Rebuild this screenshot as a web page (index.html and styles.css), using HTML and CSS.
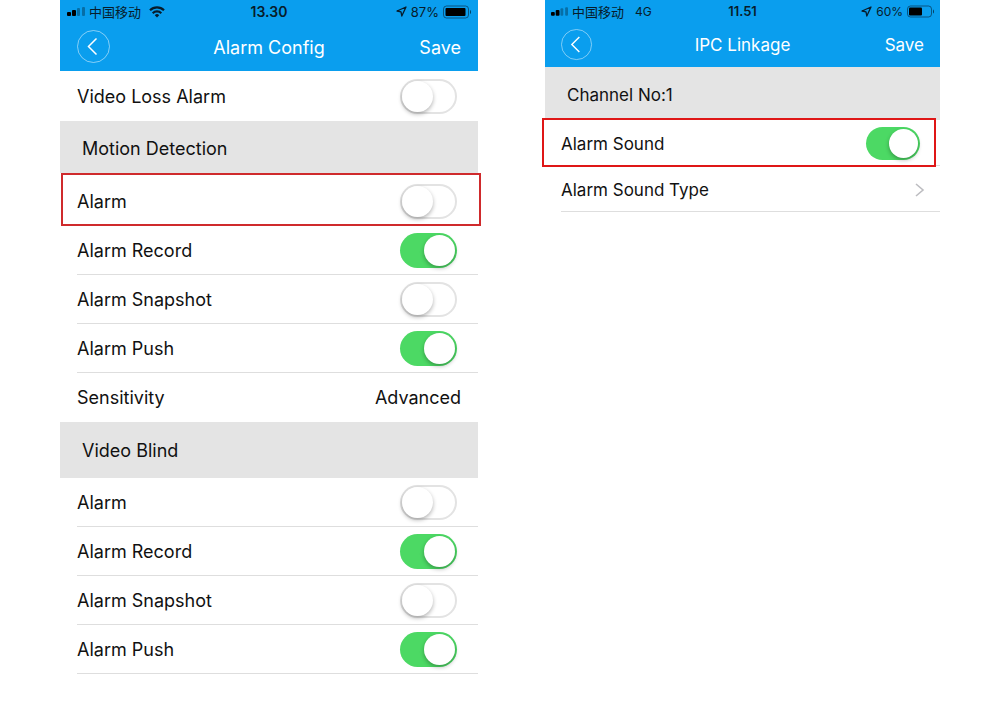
FILE: index.html
```html
<!DOCTYPE html>
<html lang="en">
<head>
  <meta charset="UTF-8">
  <meta name="viewport" content="width=device-width, initial-scale=1">
  <title>Alarm Config</title>
  <link rel="stylesheet" href="styles.css">
</head>
<body>
  <main class="screens">

    <!-- Alarm Config -->
    <section class="phone">
      <header class="header">
        <div class="status-bar">
          <div class="status-left">
            <svg width="18" height="9" viewBox="0 0 18 9">
              <rect x="0" y="5" width="4" height="4" rx="1"/>
              <rect x="5" y="3" width="4" height="6" rx="1"/>
              <rect x="10" y="1" width="3" height="8" rx="1" opacity=".3"/>
              <rect x="15" y="0" width="3" height="9" rx="1" opacity=".3"/>
            </svg>
            <span>中国移动</span>
            <svg class="wifi" width="16" height="12" viewBox="0 0 16 12" fill="none" stroke="#071c2b" stroke-width="2.2">
              <path d="M1 4.3a10 10 0 0 1 14 0"/>
              <path d="M3.7 7.2a6.2 6.2 0 0 1 8.6 0"/>
              <path d="M8 11.5 5.8 9.2a3.1 3.1 0 0 1 4.4 0z" fill="#071c2b" stroke="none"/>
            </svg>
          </div>
          <span class="time">13.30</span>
          <div class="status-right">
            <svg width="11" height="11" viewBox="0 0 11 11" fill="none" stroke="#071c2b" stroke-width="1.3" stroke-linejoin="round">
              <path d="M10 1 1 5 5 5.800 5.800 10z"/>
            </svg>
            <span>87%</span>
            <svg width="28" height="14" viewBox="0 0 28 14">
              <rect x=".5" y="1" width="25" height="12" rx="3" fill="none" stroke="#071c2b" stroke-opacity=".55"/>
              <rect x="2.5" y="3" width="20" height="8" rx="1"/>
              <path d="M27 5v4c1.300-.6 1.300-3.400 0-4z" opacity=".6"/>
            </svg>
          </div>
        </div>
        <div class="nav-bar">
          <button class="back" aria-label="Back">
            <svg width="34" height="34" viewBox="0 0 34 34" fill="none" stroke="#fff">
              <circle cx="16.500" cy="16.500" r="16" stroke-opacity=".5"/>
              <path d="M19.500 8.500 11.500 16.500l8 8" stroke-width="1.5"/>
            </svg>
          </button>
          <h1>Alarm Config</h1>
          <button class="save">Save</button>
        </div>
      </header>

      <div class="row row-last">
        <label for="videoLoss">Video Loss Alarm</label>
        <input class="switch" type="checkbox" id="videoLoss">
      </div>

      <h2 class="section-title">Motion Detection</h2>
      <div class="row row-first highlight">
        <label for="motionAlarm">Alarm</label>
        <input class="switch" type="checkbox" id="motionAlarm">
      </div>
      <div class="row">
        <label for="motionRecord">Alarm Record</label>
        <input class="switch" type="checkbox" id="motionRecord" checked>
      </div>
      <div class="row">
        <label for="motionSnapshot">Alarm Snapshot</label>
        <input class="switch" type="checkbox" id="motionSnapshot">
      </div>
      <div class="row">
        <label for="motionPush">Alarm Push</label>
        <input class="switch" type="checkbox" id="motionPush" checked>
      </div>
      <div class="row row-value">
        <label for="sensitivity">Sensitivity</label>
        <button class="value" id="sensitivity">Advanced</button>
      </div>

      <h2 class="section-title section-tall">Video Blind</h2>
      <div class="row">
        <label for="blindAlarm">Alarm</label>
        <input class="switch" type="checkbox" id="blindAlarm">
      </div>
      <div class="row">
        <label for="blindRecord">Alarm Record</label>
        <input class="switch" type="checkbox" id="blindRecord" checked>
      </div>
      <div class="row">
        <label for="blindSnapshot">Alarm Snapshot</label>
        <input class="switch" type="checkbox" id="blindSnapshot">
      </div>
      <div class="row">
        <label for="blindPush">Alarm Push</label>
        <input class="switch" type="checkbox" id="blindPush" checked>
      </div>
    </section>

    <!-- IPC Linkage -->
    <section class="phone phone-small">
      <header class="header">
        <div class="status-bar">
          <div class="status-left">
            <svg width="17" height="9" viewBox="0 0 18 9">
              <rect x="0" y="5" width="4" height="4" rx="1"/>
              <rect x="5" y="3" width="4" height="6" rx="1"/>
              <rect x="10" y="1" width="3" height="8" rx="1" opacity=".3"/>
              <rect x="15" y="0" width="3" height="9" rx="1" opacity=".3"/>
            </svg>
            <span>中国移动</span>
            <span class="network">4G</span>
          </div>
          <span class="time">11.51</span>
          <div class="status-right">
            <svg width="11" height="11" viewBox="0 0 11 11" fill="none" stroke="#071c2b" stroke-width="1.3" stroke-linejoin="round">
              <path d="M10 1 1 5 5 5.800 5.800 10z"/>
            </svg>
            <span class="percent">60%</span>
            <svg width="27" height="13" viewBox="0 0 27 13">
              <rect x=".5" y="1" width="24" height="11" rx="3" fill="none" stroke="#071c2b" stroke-opacity=".55"/>
              <rect x="2" y="2.500" width="13" height="8" rx="1"/>
              <path d="M26 4.500v4c1.300-.6 1.300-3.400 0-4z" opacity=".6"/>
            </svg>
          </div>
        </div>
        <div class="nav-bar">
          <button class="back" aria-label="Back">
            <svg width="32" height="32" viewBox="0 0 34 34" fill="none" stroke="#fff">
              <circle cx="16.500" cy="16.500" r="16" stroke-opacity=".5"/>
              <path d="M19.500 8.500 11.500 16.500l8 8" stroke-width="1.5"/>
            </svg>
          </button>
          <h1>IPC Linkage</h1>
          <button class="save">Save</button>
        </div>
      </header>

      <h2 class="section-title">Channel No:1</h2>
      <div class="row highlight">
        <label for="alarmSound">Alarm Sound</label>
        <input class="switch" type="checkbox" id="alarmSound" checked>
      </div>
      <a class="row" href="#">
        <span>Alarm Sound Type</span>
        <svg class="chevron" width="10" height="14" viewBox="0 0 10 14" fill="none" stroke="#bdbdc1" stroke-width="1.6">
          <path d="m1 1 7 6-7 6"/>
        </svg>
      </a>
    </section>

  </main>
</body>
</html>
```
FILE: styles.css
```css
* {
  box-sizing: border-box;
}
body {
  margin: 0;
  background: #fff;
  color: #111;
  font-family: Inter, "Noto Sans CJK SC", sans-serif;
  font-size: 18px;
}
button {
  padding: 0;
  border: none;
  background: none;
  color: inherit;
  font: inherit;
  cursor: pointer;
}
svg {
  display: block;
}
.screens {
  display: grid;
  grid-template-columns: 418fr 395fr;
  column-gap: 67px;
  align-items: start;
  padding: 0 6%;
}
.phone {
  --row: 49px;
  --section: 52px;
  --side: 17px;
  --switch-w: 57px;
  --switch-h: 35px;
}
.phone-small {
  --row: 46px;
  --section: 53px;
  --side: 16px;
  --switch-w: 54px;
  --switch-h: 33px;
  font-size: 17px;
}

/* blue header */
.header {
  background: #0a9eee;
}
.status-bar {
  display: grid;
  grid-template-columns: 1fr auto 1fr;
  align-items: center;
  height: 23px;
  padding: 0 7px;
  color: #071c2b;
  font-size: 13px;
}
.status-left,
.status-right {
  display: flex;
  align-items: center;
  gap: 4px;
}
.status-right {
  justify-content: flex-end;
}
.wifi {
  margin-left: 4px;
}
.network {
  margin-left: 7px;
  font-size: 12px;
}
.percent {
  font-size: 12px;
}
.time {
  font-size: 14px;
  font-weight: 600;
}
.nav-bar {
  display: grid;
  grid-template-columns: 1fr auto 1fr;
  align-items: center;
  height: 48px;
  padding: 0 var(--side);
  color: #fff;
}
.nav-bar h1 {
  margin: 0;
  font-size: inherit;
  font-weight: 400;
}
.back {
  justify-self: start;
}
.save {
  justify-self: end;
}
.phone-small .status-bar {
  height: 22px;
  padding: 0 6px;
}
.phone-small .time {
  font-size: 13px;
}
.phone-small .nav-bar {
  height: 45px;
}

/* list */
.section-title {
  display: flex;
  align-items: center;
  height: var(--section);
  margin: 0;
  padding: 3px 22px 0;
  background: #e4e4e4;
  font-size: inherit;
  font-weight: 400;
}
.section-tall {
  --section: 56px;
  padding-top: 0;
}
.row {
  position: relative;
  display: flex;
  align-items: center;
  justify-content: space-between;
  height: var(--row);
  margin-left: var(--side);
  padding-right: 21px;
  border-bottom: 1px solid #dedede;
  color: inherit;
  text-decoration: none;
}
.row-first {
  --row: 53px;
  padding-top: 4px;
}
.row-last {
  --row: 50px;
  border-bottom: none;
}
.row-value {
  border-bottom: none;
}
.value {
  margin-right: -4px;
}
.phone-small .row {
  padding-top: 2px;
  padding-right: 20px;
}
.chevron {
  margin-right: -5px;
}

/* red callout frame over the row */
.highlight::after {
  content: "";
  position: absolute;
  inset: 0 -3px -1px -16px;
  border: 2px solid #cf2a2c;
  pointer-events: none;
}
.phone-small .highlight::after {
  inset: -2px 4px -2px -19px;
  border-color: #df1717;
}

.switch {
  appearance: none;
  width: var(--switch-w);
  height: var(--switch-h);
  margin: 0;
  padding: 2px;
  border-radius: 20px;
  box-shadow: inset 0 0 0 2px #e3e3e3;
  cursor: pointer;
}
.switch::before {
  content: "";
  display: block;
  height: 100%;
  aspect-ratio: 1;
  border-radius: 50%;
  background: #fff;
  box-shadow: 0 2px 4px rgba(0, 0, 0, 0.3);
}
.switch:checked {
  background: #4cd964;
  box-shadow: none;
}
.switch:checked::before {
  margin-left: auto;
}
```
